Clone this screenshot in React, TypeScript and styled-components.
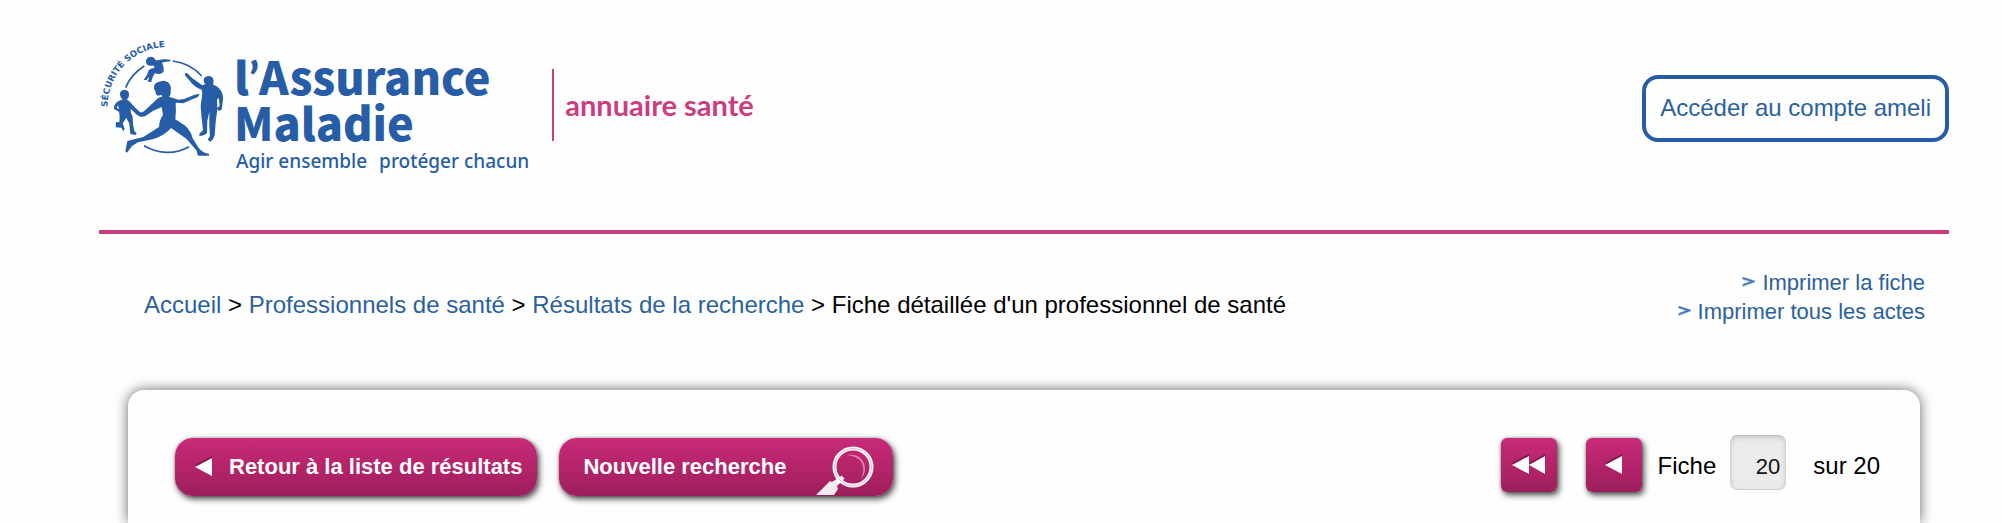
import React from "react";
import styled, { createGlobalStyle } from "styled-components";

const blue = "#265da6";
const linkBlue = "#2b619d";
const pink = "#cc3d80";
const arial = `"Liberation Sans", Arial, sans-serif`;

const GlobalStyle = createGlobalStyle`
  *, *::before, *::after { box-sizing: border-box; }
  body {
    margin: 0;
    background: #fefefe;
    color: #000;
    font-family: ${arial};
  }
`;

const Page = styled.div`
  display: flex;
  flex-direction: column;
  min-height: 100vh;
  padding: 0 53px 0 99px;
  overflow: hidden;
`;

const Header = styled.header`
  display: flex;
  justify-content: space-between;
  align-items: flex-start;
  padding: 40px 0 60px;
  border-bottom: 4px solid ${pink};
`;

const Brand = styled.a`
  display: flex;
  align-items: flex-start;
  color: ${blue};
  text-decoration: none;
`;

const Emblem = styled.svg`
  overflow: visible;
`;

const Wordmark = styled.div`
  display: flex;
  flex-direction: column;
  padding-top: 14px;
  height: 130px;
`;

const WordmarkLine = styled.span`
  margin-left: -2px;
  font: 900 45px/44px "Noto Sans CJK SC", "Noto Sans", sans-serif;
  white-space: nowrap;
`;

const Apostrophe = styled.span`
  font-family: Lato, sans-serif;
`;

const Tagline = styled.span`
  display: flex;
  gap: 12px;
  padding-top: 3px;
  font: 500 19px/28px "Noto Sans", sans-serif;
  white-space: nowrap;
`;

const ServiceName = styled.span`
  display: flex;
  align-items: center;
  height: 72px;
  margin: 29px 0 0 23px;
  padding-left: 11px;
  border-left: 2px solid ${pink};
  color: ${pink};
  font: 700 29px/36px Lato, sans-serif;
  white-space: nowrap;
`;

const AccountLink = styled.a`
  display: flex;
  align-items: center;
  height: 67px;
  margin-top: 35px;
  padding: 0 14px 2px;
  border: 4px solid ${blue};
  border-radius: 16px;
  color: ${linkBlue};
  font-size: 24px;
  line-height: 28px;
  text-decoration: none;
  white-space: nowrap;
`;

const SubHeader = styled.div`
  display: flex;
  justify-content: space-between;
  align-items: center;
  padding: 34px 24px 0 45px;
`;

const Breadcrumb = styled.nav`
  font-size: 24px;
  line-height: 28px;
  padding-top: 16px;
`;

const TextLink = styled.a`
  color: ${linkBlue};
  text-decoration: none;
`;

const PrintList = styled.ul`
  list-style: none;
  margin: 0;
  padding: 0;
  text-align: right;
  font-size: 22px;
  line-height: 29px;
`;

const Chevron = styled.svg`
  margin-right: 7px;
  vertical-align: 3px;
`;

const Panel = styled.main`
  display: flex;
  flex: 1;
  justify-content: space-between;
  align-items: flex-start;
  margin: 64px 29px 0;
  padding: 45px 40px 24px 47px;
  border-radius: 16px 16px 0 0;
  background: #fefefe;
  box-shadow: 0 0 13px 0 rgba(0, 0, 0, 0.6);
`;

const Actions = styled.div`
  display: flex;
  gap: 22px;
  padding-top: 3px;
`;

const PinkButton = styled.button<{ $square?: boolean }>`
  display: flex;
  align-items: center;
  justify-content: center;
  flex: none;
  height: ${(p) => (p.$square ? 54 : 58)}px;
  width: ${(p) => (p.$square ? "56px" : "auto")};
  padding: 0;
  border: 0;
  border-radius: ${(p) => (p.$square ? 6 : 18)}px;
  background: linear-gradient(#c92a79, #b42469 50%, #9c1f5d);
  box-shadow: 2px 3px 6px rgba(0, 0, 0, 0.7), 0 0 3px rgba(0, 0, 0, 0.3);
  color: #fff;
  font: 700 22px/26px ${arial};
  white-space: nowrap;
  cursor: pointer;
`;

const BackButton = styled(PinkButton)`
  gap: 16px;
  padding: 0 15px 0 20px;
`;

const SearchButton = styled(PinkButton)`
  gap: 30px;
  padding: 0 19px 0 24px;
`;

const Magnifier = styled.svg`
  align-self: flex-end;
`;

const Pager = styled.form`
  display: flex;
  align-items: flex-start;
  font-size: 24px;
  line-height: 28px;
`;

const PagerButtons = styled.div`
  display: flex;
  gap: 29px;
  padding-top: 3px;
  margin-right: 16px;
`;

const PagerLabel = styled.label`
  margin: 17px 14px 0 0;
`;

const PageInput = styled.input`
  width: 56px;
  height: 55px;
  margin-right: 27px;
  padding: 9px 5px 0 0;
  border: 1px solid #d2d2d2;
  border-top-color: #bdbdbd;
  border-radius: 7px;
  background: #ebebeb;
  box-shadow: inset 0 2px 5px rgba(0, 0, 0, 0.14);
  color: #111;
  font: 22px/26px ${arial};
  text-align: right;
`;

const PagerTotal = styled.span`
  margin-top: 17px;
`;

function AssuranceEmblem() {
  return (
    <Emblem width="137" height="120" viewBox="27 30 411 360" fill={blue} aria-hidden="true">
      <defs>
        <path id="motto-arc" d="M53 231 A177 177 0 0 1 290 62" />
      </defs>
      <text fontFamily="DejaVu Sans, sans-serif" fontWeight="700" fontSize="26">
        <textPath href="#motto-arc">SÉCURITÉ SOCIALE</textPath>
      </text>
      <g fill="none" stroke={blue} strokeWidth="5">
        <path d="M107 173Q123 133 163 108" />
        <path d="M205 93Q223 88 241 92" />
        <path d="M248 93Q300 99 335 138" />
        <path d="M162 347Q195 366 230 367Q266 368 297 350" />
      </g>
      {/* jumping child */}
      <path d="M168 92Q170 82 181 80Q194 81 197 91L207 91Q226 88 240 91L239 94Q226 95 216 98Q223 111 221 124Q217 134 205 132L194 130L188 142L184 155Q178 157 172 153L177 147L176 142L169 151L161 149L171 135L176 121Q182 115 192 114L193 107Q181 109 172 104Q167 98 168 92Z" />
      {/* small child */}
      <path d="M90 190Q91 181 103 179Q116 180 117 191Q118 203 110 208Q123 216 131 229L152 248L151 259L141 255L122 236Q121 250 128 260L129 282L133 303L140 310L137 315L121 312L118 281L109 264L98 280L104 297L100 304L94 293L77 292L78 276L88 277L89 258L87 245L72 237Q71 222 85 214L98 208Q90 203 90 190ZM84 226L80 233L87 238Z" fillRule="evenodd" />
      {/* adult */}
      <path d="M284 130L292 130L306 144L337 166L346 163Q338 151 343 144Q352 134 365 140Q374 148 369 164Q386 169 394 184Q401 198 398 216L395 239L386 243L381 235L389 227L386 203L381 209L382 236L377 277L374 316Q370 330 361 335L353 329L360 318L358 288L358 245L352 272L351 309Q342 318 328 318L328 311L339 301L335 265L332 229L337 190L335 179Q310 170 297 149L286 138Z" />
      {/* runner */}
      <path d="M192 170Q194 157 213 154Q222 149 234 157Q245 166 242 183Q243 196 237 200L265 209Q282 209 299 200L314 194L329 191L324 201L307 208L280 220L257 218Q259 245 256 268L286 287Q303 304 308 325L326 354Q339 370 357 371L357 377L324 377L319 361L289 326L243 294Q225 316 191 327L144 337L126 348L111 368L106 364L112 333L160 321L207 291Q208 270 219 255L215 231L190 242L165 259L149 261L147 250L162 244L192 216Q205 200 217 200L215 195L203 197Q195 193 197 183Q192 181 192 170Z" />
    </Emblem>
  );
}

function Triangle({ double }: { double?: boolean }) {
  const points = double ? ["0,11 17,2 17,20", "17,11 33,2 33,20"] : ["0,11 17,2 17,20"];
  return (
    <svg width={double ? 34 : 18} height="22" viewBox={`0 0 ${double ? 34 : 18} 22`} aria-hidden="true">
      {points.map((p) => (
        <polygon key={p} points={p} fill="#7d184b" transform="translate(0 -2)" />
      ))}
      {points.map((p) => (
        <polygon key={p} points={p} fill="#fff" />
      ))}
    </svg>
  );
}

function PrintChevron() {
  return (
    <Chevron width="13" height="10" viewBox="0 0 13 10" fill="none" aria-hidden="true">
      <path d="M0 1L11 4.5L0 9" stroke="#a9c5e2" strokeWidth="3" />
      <path d="M1 1L11 4.5L1 8" stroke="#3f77b3" strokeWidth="1.8" />
    </Chevron>
  );
}

const crumbs = ["Accueil", "Professionnels de santé", "Résultats de la recherche"];
const printLinks = ["Imprimer la fiche", "Imprimer tous les actes"];

export default function App() {
  return (
    <>
      <GlobalStyle />
      <Page>
        <Header>
          <Brand href="#accueil">
            <AssuranceEmblem />
            <Wordmark>
              <WordmarkLine>
                l<Apostrophe>’</Apostrophe>Assurance
              </WordmarkLine>
              <WordmarkLine>Maladie</WordmarkLine>
              <Tagline>
                <span>Agir ensemble</span>
                <span>protéger chacun</span>
              </Tagline>
            </Wordmark>
            <ServiceName>annuaire santé</ServiceName>
          </Brand>
          <AccountLink href="#compte">Accéder au compte ameli</AccountLink>
        </Header>

        <SubHeader>
          <Breadcrumb aria-label="Fil d'Ariane">
            {crumbs.map((c) => (
              <React.Fragment key={c}>
                <TextLink href="#">{c}</TextLink>
                {" > "}
              </React.Fragment>
            ))}
            <span>Fiche détaillée d'un professionnel de santé</span>
          </Breadcrumb>
          <PrintList>
            {printLinks.map((l) => (
              <li key={l}>
                <TextLink href="#">
                  <PrintChevron />
                  {l}
                </TextLink>
              </li>
            ))}
          </PrintList>
        </SubHeader>

        <Panel>
          <Actions>
            <BackButton type="button">
              <Triangle />
              Retour à la liste de résultats
            </BackButton>
            <SearchButton type="button">
              Nouvelle recherche
              <Magnifier width="58" height="50" viewBox="0 0 58 50" fill="none" aria-hidden="true">
                <path d="M0 49L14 35L16 36L22 32L25 35L21 40L22 43L18 49Z" fill="#f3e9ef" />
                <path d="M21 37L27 31" stroke="#fff" strokeWidth="4" />
                <circle cx="37" cy="21" r="18.5" stroke="#fff" strokeWidth="4" />
                <circle cx="37" cy="21" r="18.5" stroke="#e5b5ce" strokeWidth="1" />
                <path d="M31 9Q43 7 48 17Q51 26 45 33Q49 24 46 17Q42 10 31 9Z" fill="#dc86b1" />
              </Magnifier>
            </SearchButton>
          </Actions>
          <Pager>
            <PagerButtons>
              <PinkButton type="button" $square aria-label="Première fiche">
                <Triangle double />
              </PinkButton>
              <PinkButton type="button" $square aria-label="Fiche précédente">
                <Triangle />
              </PinkButton>
            </PagerButtons>
            <PagerLabel htmlFor="fiche">Fiche</PagerLabel>
            <PageInput id="fiche" type="text" defaultValue="20" />
            <PagerTotal>sur 20</PagerTotal>
          </Pager>
        </Panel>
      </Page>
    </>
  );
}
